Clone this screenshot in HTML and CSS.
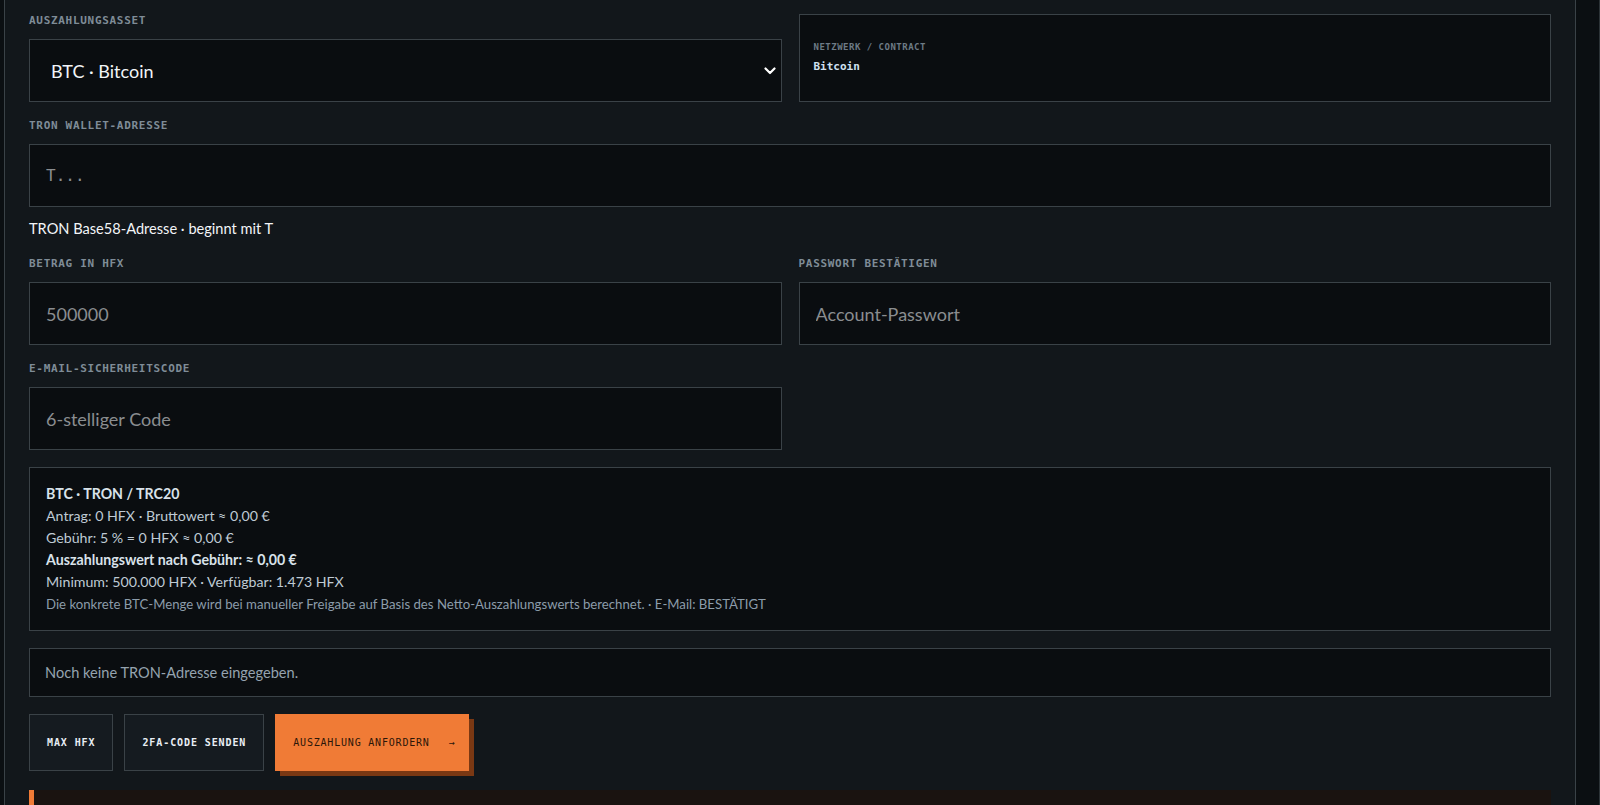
FILE: index.html
```html
<!DOCTYPE html>
<html lang="de">

<head>
    <meta charset="UTF-8">
    <meta name="viewport" content="width=device-width, initial-scale=1.0">
    <title>Auszahlung anfordern</title>
    <link rel="stylesheet" href="styles.css">
</head>

<body>
    <div class="page">
        <section class="panel">
            <form class="withdraw" id="withdrawForm">
                <div class="row two">
                    <div class="field">
                        <label for="asset">Auszahlungsasset</label>
                        <div class="select-wrap">
                            <select id="asset">
                                <option>BTC · Bitcoin</option>
                            </select>
                            <svg class="chevron" viewBox="0 0 12 8" width="12" height="8">
                                <path d="M1.5 1.5 L6 6 L10.5 1.5" fill="none" stroke="#fff" stroke-width="2.2" stroke-linecap="round" stroke-linejoin="round" />
                            </svg>
                        </div>
                    </div>
                    <div class="netinfo">
                        <span class="netinfo-label">Netzwerk / Contract</span>
                        <span class="netinfo-value">Bitcoin</span>
                    </div>
                </div>

                <div class="field">
                    <label for="address">TRON Wallet-Adresse</label>
                    <input type="text" id="address" class="mono" placeholder="T...">
                    <p class="hint">TRON Base58-Adresse · beginnt mit T</p>
                </div>

                <div class="row two">
                    <div class="field">
                        <label for="amount">Betrag in HFX</label>
                        <input type="number" id="amount" placeholder="500000">
                    </div>
                    <div class="field">
                        <label for="password">Passwort bestätigen</label>
                        <input type="password" id="password" placeholder="Account-Passwort">
                    </div>
                </div>

                <div class="row two">
                    <div class="field">
                        <label for="code">E-Mail-Sicherheitscode</label>
                        <input type="text" id="code" placeholder="6-stelliger Code">
                    </div>
                </div>

                <div class="summary">
                    <p><strong>BTC · TRON / TRC20</strong></p>
                    <p>Antrag: 0 HFX · Bruttowert ≈ 0,00 €</p>
                    <p>Gebühr: 5 % = 0 HFX ≈ 0,00 €</p>
                    <p><strong>Auszahlungswert nach Gebühr: ≈ 0,00 €</strong></p>
                    <p>Minimum: 500.000 HFX · Verfügbar: 1.473 HFX</p>
                    <p class="note">Die konkrete BTC-Menge wird bei manueller Freigabe auf Basis des Netto-Auszahlungswerts berechnet. · E-Mail: BESTÄTIGT</p>
                </div>

                <div class="status">Noch keine TRON-Adresse eingegeben.</div>

                <div class="actions">
                    <button type="button" class="btn">Max HFX</button>
                    <button type="button" class="btn">2FA-Code senden</button>
                    <button type="button" class="btn primary">Auszahlung anfordern <span class="arrow">→</span></button>
                </div>

                <div class="notice"></div>
            </form>
        </section>
    </div>
</body>

</html>
```

FILE: styles.css
```css
:root {
    --page-bg: #0b0f12;
    --panel-bg: #12171b;
    --field-bg: #0a0d10;
    --border: #3a4247;
    --label: #7f8c97;
    --text: #bfcad4;
    --placeholder: #8a8d90;
    --accent: #f07b36;
    --accent-shadow: #7a3813;
    --mono: "DejaVu Sans Mono", "Liberation Mono", monospace;
    --sans: "Lato", "Noto Sans", sans-serif;
}

* {
    box-sizing: border-box;
}

html,
body {
    margin: 0;
    height: 100%;
    overflow: hidden;
    background-color: var(--page-bg);
}

body {
    font-family: var(--sans);
    color: var(--text);
}

.page {
    height: 100%;
    width: 1600px;
    padding-left: 4px;
    border-right: 1px solid #2c3337;
}

.panel {
    width: 1572px;
    height: 100%;
    background-color: var(--panel-bg);
    border-left: 1px solid var(--border);
    border-right: 1px solid var(--border);
    padding: 14px 24px 0 24px;
}

.withdraw {
    display: flex;
    flex-direction: column;
    gap: 17px;
}

.row.two {
    display: grid;
    grid-template-columns: 1fr 1fr;
    gap: 17px;
}

.field {
    display: flex;
    flex-direction: column;
}

label {
    font-family: var(--mono);
    font-size: 11px;
    font-weight: bold;
    line-height: 14px;
    letter-spacing: 0.7px;
    text-transform: uppercase;
    color: var(--label);
    margin-bottom: 11px;
}

input,
select {
    width: 100%;
    height: 63px;
    background-color: var(--field-bg);
    border: 1px solid var(--border);
    border-radius: 0;
    color: #e6edf3;
    font-family: var(--sans);
    font-size: 18px;
    padding: 0 16px;
    outline: none;
    -moz-appearance: textfield;
}

input::placeholder {
    color: var(--placeholder);
    opacity: 1;
}

input::-webkit-outer-spin-button,
input::-webkit-inner-spin-button {
    -webkit-appearance: none;
    margin: 0;
}

input.mono {
    font-family: var(--mono);
    font-size: 16px;
    padding-left: 16px;
}

.select-wrap {
    position: relative;
}

select {
    appearance: none;
    -webkit-appearance: none;
    font-size: 18px;
    color: #f2f5f8;
    padding-left: 21px;
}

.chevron {
    position: absolute;
    right: 6px;
    top: 28px;
    pointer-events: none;
}

.netinfo {
    background-color: var(--field-bg);
    border: 1px solid var(--border);
    padding: 27px 14px 0;
    display: flex;
    flex-direction: column;
    gap: 8px;
}

.netinfo-label {
    font-family: var(--mono);
    font-size: 9px;
    font-weight: bold;
    letter-spacing: 0.5px;
    text-transform: uppercase;
    color: #6d7a85;
}

.netinfo-value {
    font-family: var(--mono);
    font-size: 11px;
    font-weight: bold;
    color: #cfe0f0;
}

.hint {
    margin: 13px 0 2px;
    font-size: 14.6px;
    line-height: 18px;
    color: #f2f5f8;
}

.summary {
    background-color: var(--field-bg);
    border: 1px solid var(--border);
    padding: 15px 16px;
}

.summary p {
    margin: 0;
    font-size: 14.2px;
    line-height: 22px;
}

.summary strong {
    color: #d9e2ea;
}

.summary .note {
    font-size: 13.2px;
    color: #8c9caa;
}

.status {
    background-color: var(--field-bg);
    border: 1px solid var(--border);
    padding: 0 15px;
    height: 49px;
    display: flex;
    align-items: center;
    font-size: 14.6px;
    color: #95a3af;
}

.actions {
    display: flex;
    gap: 11px;
}

.btn {
    height: 57px;
    padding: 0 17px;
    background-color: #151b20;
    border: 1px solid var(--border);
    color: #e8eef4;
    font-family: var(--mono);
    font-size: 10px;
    font-weight: bold;
    letter-spacing: 0.9px;
    text-transform: uppercase;
    cursor: pointer;
}

.btn.primary {
    background-color: var(--accent);
    border-color: var(--accent);
    color: #2b1609;
    font-weight: normal;
    letter-spacing: 0.8px;
    padding: 0 13px 0 17px;
    box-shadow: 5px 5px 0 var(--accent-shadow);
}

.btn .arrow {
    margin-left: 12px;
}

.notice {
    height: 40px;
    margin-top: 2px;
    background-color: #1a1310;
    border-left: 5px solid var(--accent);
}
```
